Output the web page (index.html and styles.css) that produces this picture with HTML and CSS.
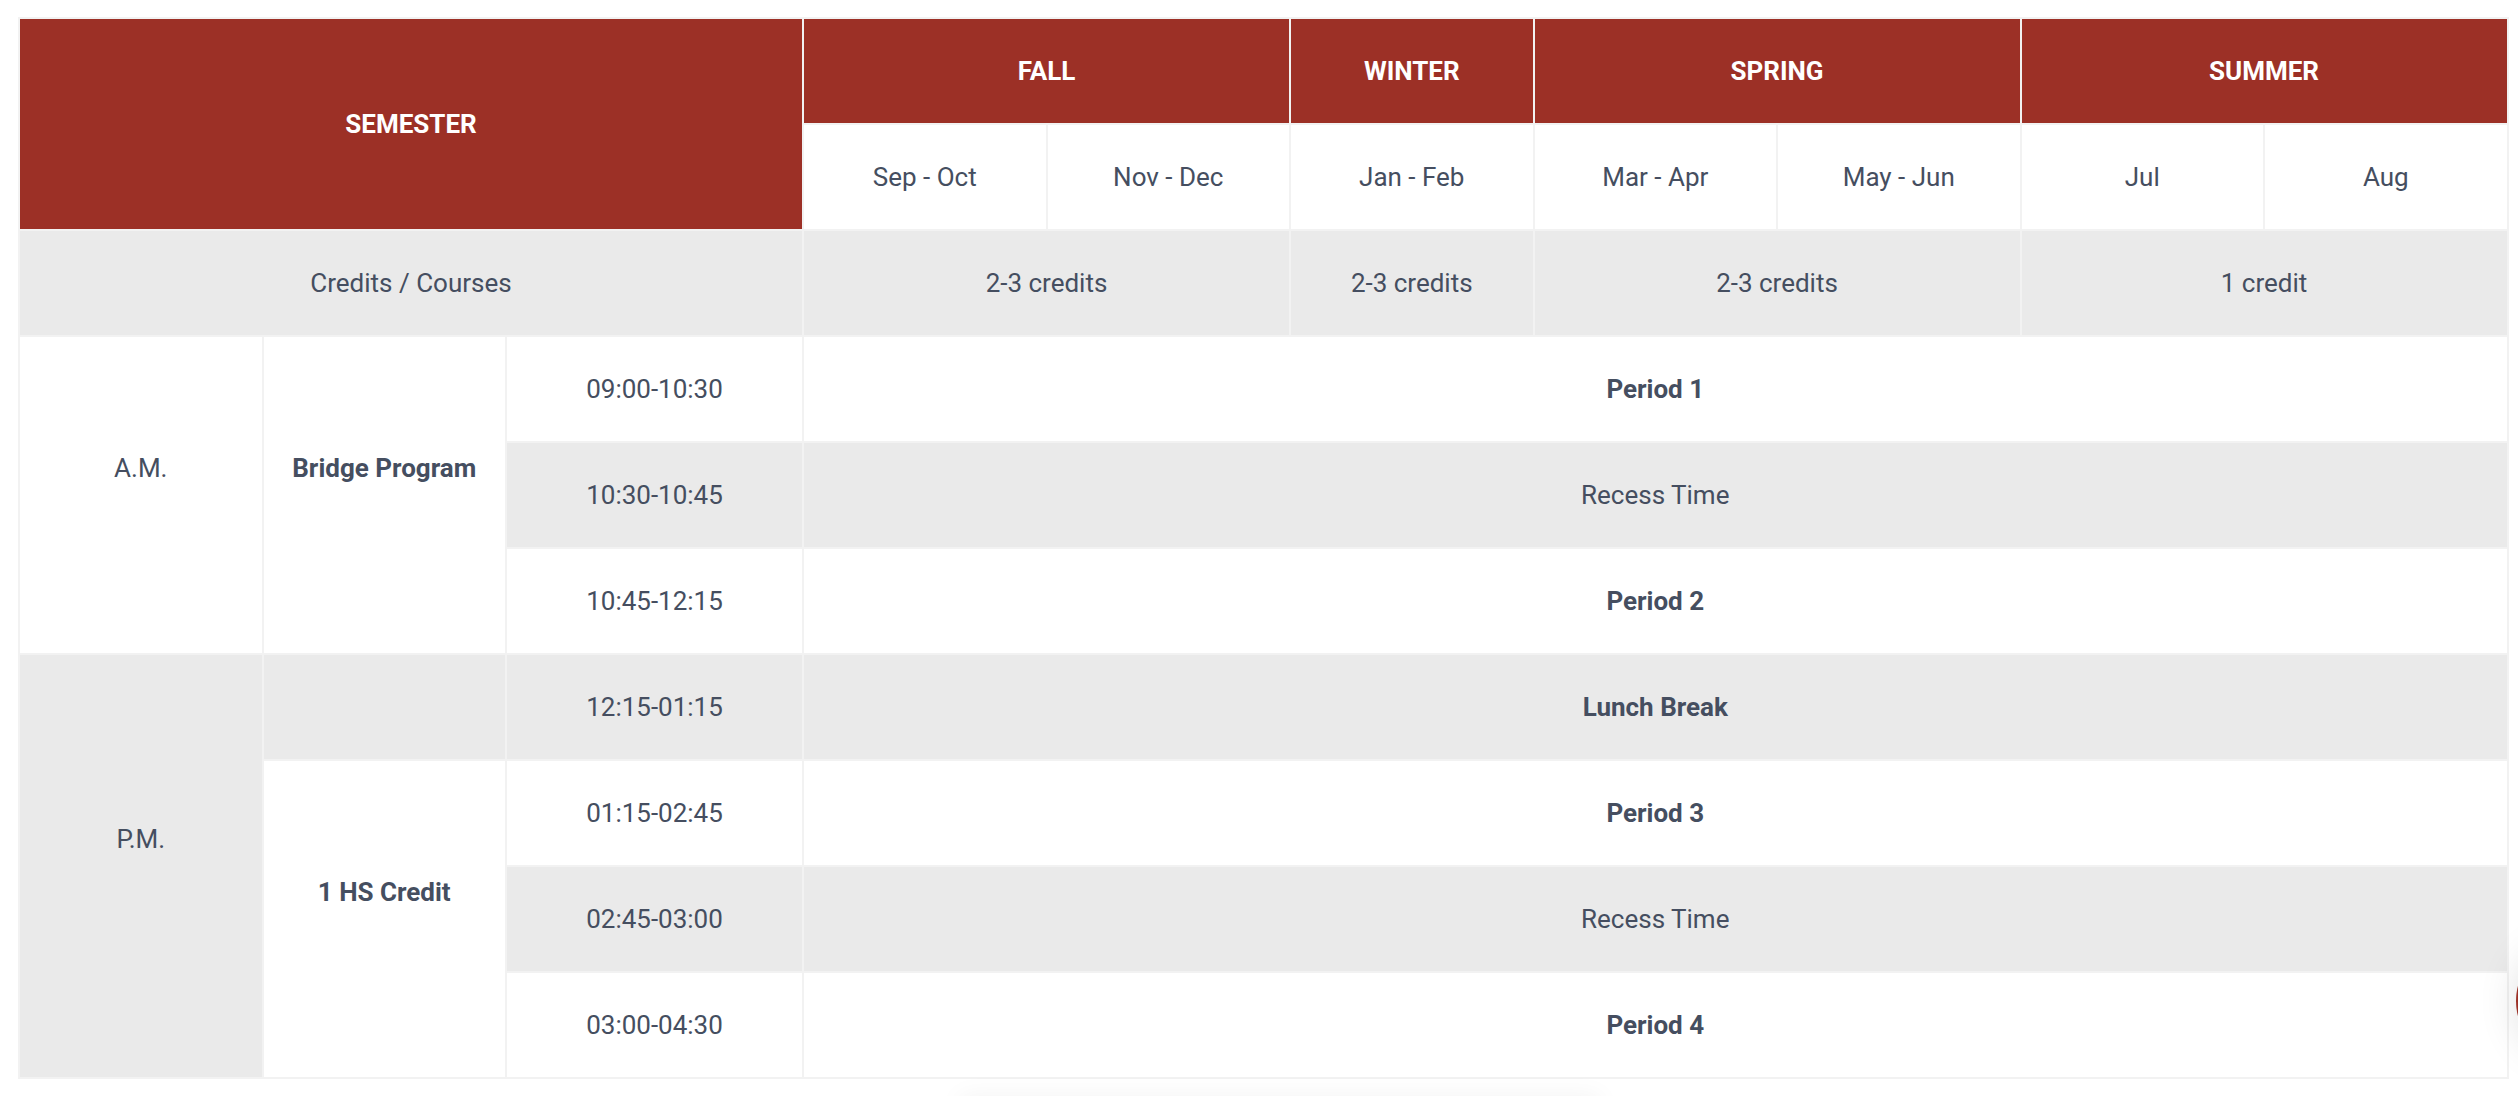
FILE: index.html
```
<!DOCTYPE html>
<html lang="en">
   <head>
      <meta charset="UTF-8">
      <link rel="stylesheet" href="styles.css">
   </head>
   <body>
      <div class="page">
         <table class="schedule">
            <colgroup>
               <col class="col_wide">
               <col class="col_wide">
               <col class="col_time">
               <col class="col_wide">
               <col class="col_wide">
               <col class="col_wide">
               <col class="col_wide">
               <col class="col_wide">
               <col class="col_wide">
               <col class="col_wide">
            </colgroup>
            <thead>
               <tr>
                  <th colspan="3" rowspan="2">Semester</th>
                  <th colspan="2">Fall</th>
                  <th>Winter</th>
                  <th colspan="2">Spring</th>
                  <th colspan="2">Summer</th>
               </tr>
               <tr class="month_row">
                  <td>Sep - Oct</td>
                  <td>Nov - Dec</td>
                  <td>Jan - Feb</td>
                  <td>Mar - Apr</td>
                  <td>May - Jun</td>
                  <td>Jul</td>
                  <td>Aug</td>
               </tr>
               <tr class="credit_row">
                  <td colspan="3">Credits / Courses</td>
                  <td colspan="2">2-3 credits</td>
                  <td>2-3 credits</td>
                  <td colspan="2">2-3 credits</td>
                  <td colspan="2">1 credit</td>
               </tr>
            </thead>
            <tbody>
               <tr>
                  <td rowspan="3" class="span_cell">A.M.</td>
                  <td rowspan="3" class="span_cell strong">Bridge Program</td>
                  <td>09:00-10:30</td>
                  <td colspan="7" class="strong">Period 1</td>
               </tr>
               <tr>
                  <td>10:30-10:45</td>
                  <td colspan="7">Recess Time</td>
               </tr>
               <tr>
                  <td>10:45-12:15</td>
                  <td colspan="7" class="strong">Period 2</td>
               </tr>
               <tr>
                  <td rowspan="4" class="span_cell">P.M.</td>
                  <td></td>
                  <td>12:15-01:15</td>
                  <td colspan="7" class="strong">Lunch Break</td>
               </tr>
               <tr>
                  <td rowspan="3" class="span_cell strong">1 HS Credit</td>
                  <td>01:15-02:45</td>
                  <td colspan="7" class="strong">Period 3</td>
               </tr>
               <tr>
                  <td>02:45-03:00</td>
                  <td colspan="7">Recess Time</td>
               </tr>
               <tr>
                  <td>03:00-04:30</td>
                  <td colspan="7" class="strong">Period 4</td>
               </tr>
            </tbody>
         </table>
      </div>

      <div class="chat_button"></div>
      <div class="bottom_bar"></div>
   </body>
</html>
```

FILE: styles.css
```
body{
    margin: 0;
    background: #ffffff;
    font-family: Roboto, "Liberation Sans", sans-serif;
}

.page{
    padding: 17px 11px 0 18px;
}

.schedule{
    width: 2490px;
    border-collapse: collapse;
    table-layout: fixed;
    border: 2px solid #f2f2f2;
}

.col_wide{
    width: 243.5px;
}

.col_time{
    width: 297px;
}

.schedule th,
.schedule td{
    border: 2px solid #f2f2f2;
    height: 104px;
    padding: 0 10px;
    text-align: center;
    vertical-align: middle;
    font-size: 26px;
    font-weight: 400;
    color: #454e60;
}

.schedule th{
    background: #9c3026;
    color: #ffffff;
    font-weight: 700;
    text-transform: uppercase;
}

.month_row td{
    background: #ffffff;
}

.credit_row td{
    background: #eaeaea;
}

.schedule tbody tr:nth-child(even) td{
    background: #eaeaea;
}

.strong{
    font-weight: 700 !important;
}

/* the tall cells sit a little above the middle in the original */
.span_cell{
    padding-bottom: 54px !important;
}

.chat_button{
    position: fixed;
    right: -118px;
    top: 941px;
    width: 120px;
    height: 120px;
    border-radius: 50%;
    background: #9c3026;
    box-shadow: 0 0 40px rgba(0, 0, 0, 0.12);
}

.bottom_bar{
    position: fixed;
    left: 960px;
    bottom: -80px;
    width: 640px;
    height: 80px;
    background: #ffffff;
    box-shadow: 0 0 24px rgba(0, 0, 0, 0.05);
}
```
